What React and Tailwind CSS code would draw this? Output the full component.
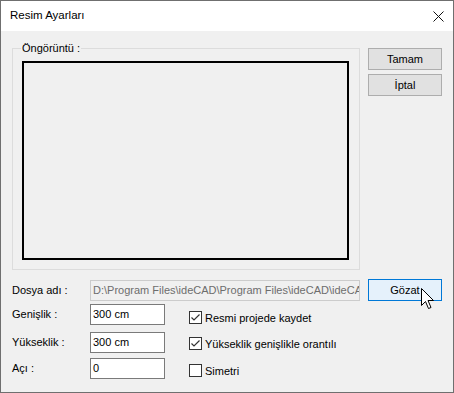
function Check({ checked, label }) {
  return (
    <div className="flex items-center h-[13px]">
      <div className="w-[13px] h-[13px] border border-[#333333] bg-white flex items-center justify-center">
        {checked && (
          <svg width="11" height="11" viewBox="0 0 11 11">
            <path d="M1.5 5.5 L4 8 L9.5 2.5" fill="none" stroke="#333333" strokeWidth="1.2" />
          </svg>
        )}
      </div>
      <span className="ml-[3px] leading-[14px]">{label}</span>
    </div>
  )
}

function Field({ label, value }) {
  return (
    <div className="flex items-center h-[21px]">
      <span className="w-[78px]">{label}</span>
      <div className="w-[75px] h-[21px] border border-[#7a7a7a] bg-white pl-[2px] leading-[19px] whitespace-nowrap overflow-hidden">
        {value}
      </div>
    </div>
  )
}

export default function App() {
  return (
    <div className="relative w-[454px] h-[393px] border border-[#6f6f6f] bg-[#f0f0f0] flex flex-col text-[11px] text-black font-['Liberation_Sans',Arial,sans-serif]">
      {/* Title bar */}
      <div className="h-[30px] bg-white flex items-center justify-between pl-[9px] pr-[9px]">
        <span className="text-[11.5px]">Resim Ayarları</span>
        <svg width="11" height="11" viewBox="0 0 11 11">
          <path d="M0.5 0.5 L10.5 10.5 M10.5 0.5 L0.5 10.5" stroke="#111111" strokeWidth="1" />
        </svg>
      </div>

      <div className="flex-1 pl-[11px] pt-[17px]">
        {/* Preview + buttons */}
        <div className="flex items-start">
          <div className="relative w-[348px] h-[222px] border border-[#dcdcdc] pt-[12px] pl-[9px]">
            <span className="absolute -top-[8px] left-[8px] px-[1px] bg-[#f0f0f0] leading-[14px]">
              Öngörüntü :
            </span>
            <div className="w-[327px] h-[199px] border-2 border-black" />
          </div>
          <div className="ml-[8px] flex flex-col gap-[4px]">
            <div className="w-[74px] h-[22px] border border-[#adadad] bg-[#e1e1e1] flex items-center justify-center">
              Tamam
            </div>
            <div className="w-[74px] h-[22px] border border-[#adadad] bg-[#e1e1e1] flex items-center justify-center">
              İptal
            </div>
          </div>
        </div>

        {/* File name */}
        <div className="mt-[9px] flex items-center h-[22px]">
          <span className="w-[78px]">Dosya adı :</span>
          <div className="w-[270px] h-[21px] border border-[#cccccc] bg-[#f0f0f0] text-[#6d6d6d] pl-[2px] leading-[19px] whitespace-nowrap overflow-hidden">
            D:\Program Files\ideCAD\Program Files\ideCAD\ideCAD\Resimler
          </div>
          <div className="ml-[8px] w-[74px] h-[22px] border border-[#0078d7] bg-[#e5f1fb] flex items-center justify-center">
            Gözat
          </div>
        </div>

        {/* Size fields + options */}
        <div className="mt-[3px] flex items-start">
          <div className="flex flex-col">
            <Field label="Genişlik :" value="300 cm" />
            <div className="mt-[7px]">
              <Field label="Yükseklik :" value="300 cm" />
            </div>
            <div className="mt-[5px]">
              <Field label="Açı :" value="0" />
            </div>
          </div>
          <div className="ml-[24px] pt-[7px] flex flex-col">
            <Check checked label="Resmi projede kaydet" />
            <div className="mt-[13px]">
              <Check checked label="Yükseklik genişlikle orantılı" />
            </div>
            <div className="mt-[14px]">
              <Check label="Simetri" />
            </div>
          </div>
        </div>
      </div>

      {/* Mouse cursor over Gözat */}
      <svg className="absolute left-[420px] top-[287px]" width="14" height="22" viewBox="0 0 14 22">
        <path
          d="M0.5 0.5 L0.5 17.5 L4.5 13.5 L7.5 20.5 L10 19.5 L7 12.5 L12.5 12.5 Z"
          fill="white"
          stroke="black"
          strokeWidth="1"
          strokeLinejoin="miter"
        />
      </svg>
    </div>
  )
}
